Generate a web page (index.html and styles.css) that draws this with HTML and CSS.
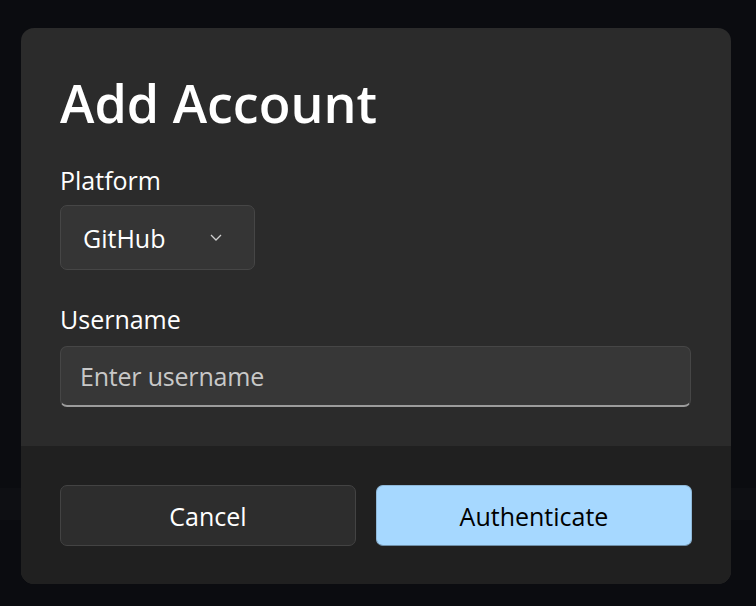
FILE: index.html
```html
<!DOCTYPE html>
<html lang="en">
<head>
<meta charset="utf-8">
<title>Add Account</title>
<link rel="stylesheet" href="styles.css">
</head>
<body>
<div class="dialog">
  <div class="dialog-body">
    <h1 class="title">Add Account</h1>
    <div class="label">Platform</div>
    <div class="combo">
      <span class="combo-text">GitHub</span>
      <svg class="chevron" width="12" height="7" viewBox="0 0 12 7"><path d="M1 1 L6 6 L11 1" fill="none" stroke="#cfcfcf" stroke-width="1.3"/></svg>
    </div>
    <div class="label label-user">Username</div>
    <div class="textbox"><span class="placeholder">Enter username</span></div>
  </div>
  <div class="dialog-footer">
    <button class="btn btn-secondary">Cancel</button>
    <button class="btn btn-primary">Authenticate</button>
  </div>
</div>
</body>
</html>
```
FILE: styles.css
```css
html, body {
  margin: 0;
  padding: 0;
}
body {
  width: 756px;
  height: 606px;
  overflow: hidden;
  background: linear-gradient(to bottom, #0b0c10 0, #0b0c10 488px, #0e0f13 488px, #0e0f13 520px, #0b0c10 520px);
  font-family: "Open Sans", "Noto Sans", sans-serif;
  color: #ffffff;
}
.dialog {
  margin: 28px 0 0 21px;
  width: 710px;
  height: 556px;
  border-radius: 13px;
  overflow: hidden;
  background: #2b2b2b;
  display: flex;
  flex-direction: column;
}
.dialog-body {
  height: 418px;
  box-sizing: border-box;
  padding: 45px 40px 0 39px;
}
.title {
  margin: 0;
  font-size: 52px;
  line-height: 60px;
  font-weight: 600;
}
.label {
  margin-top: 31px;
  font-size: 25px;
  line-height: 32px;
  font-weight: 400;
}
.combo {
  margin-top: 9px;
  width: 195px;
  height: 65px;
  box-sizing: border-box;
  border: 1px solid #464646;
  border-radius: 7px;
  background: #353535;
  display: flex;
  align-items: center;
  padding-left: 22px;
}
.combo-text {
  font-size: 25px;
  line-height: 32px;
}
.chevron {
  margin-left: auto;
  margin-right: 32px;
}
.label-user {
  margin-top: 33px;
}
.textbox {
  margin-top: 11px;
  width: 631px;
  height: 61px;
  box-sizing: border-box;
  border: 1px solid #464646;
  border-bottom: 2px solid #9c9c9c;
  border-radius: 7px;
  background: #373737;
  display: flex;
  align-items: center;
  padding-left: 19px;
}
.placeholder {
  font-size: 25px;
  line-height: 32px;
  letter-spacing: -0.2px;
  color: #c8c8c8;
}
.dialog-footer {
  flex: 1;
  background: #202020;
  box-sizing: border-box;
  padding: 39px 0 0 39px;
  display: grid;
  grid-template-columns: 296px 316px;
  column-gap: 20px;
  align-content: start;
}
.btn {
  height: 61px;
  box-sizing: border-box;
  border-radius: 7px;
  font-family: "Open Sans", "Noto Sans", sans-serif;
  font-size: 25px;
  line-height: 32px;
  padding: 0;
}
.btn-secondary {
  background: #2d2d2d;
  border: 1px solid #434343;
  color: #ffffff;
}
.btn-primary {
  background: #a6d8ff;
  border: 1px solid #8fb8d8;
  border-bottom-color: #6f8fa8;
  color: #000000;
}
```
